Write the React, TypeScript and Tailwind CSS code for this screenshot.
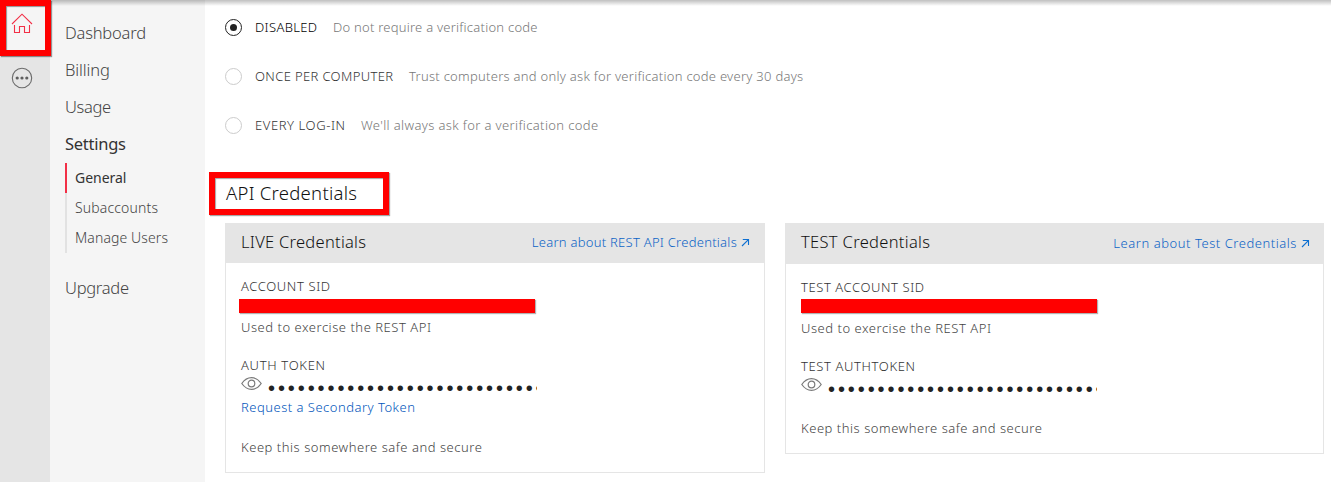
import type { ReactNode } from 'react';

const light = "font-['Noto_Sans',sans-serif] font-light whitespace-nowrap";
const book = "font-['Noto_Sans',sans-serif] font-normal whitespace-nowrap";

function HomeIcon() {
  return (
    <svg width="22" height="22" viewBox="0 0 22 22" fill="none" stroke="#f22f46" strokeWidth="1.1">
      <path d="M1 11 L11 1.2 L21 11" />
      <path d="M3.5 12 V19.5 H8.5 V13.5 H13.5 V19.5 H18.5 V12" />
    </svg>
  );
}

function MoreIcon() {
  return (
    <svg width="22" height="22" viewBox="0 0 22 22" fill="none">
      <circle cx="11" cy="11" r="9.7" stroke="#6b6b6b" strokeWidth="1.1" />
      <circle cx="6.2" cy="11" r="1.6" fill="#5e5e5e" />
      <circle cx="11" cy="11" r="1.6" fill="#5e5e5e" />
      <circle cx="15.8" cy="11" r="1.6" fill="#5e5e5e" />
    </svg>
  );
}

function EyeIcon() {
  return (
    <svg width="22" height="14" viewBox="0 0 22 14" fill="none" stroke="#7a7a7a" strokeWidth="1.2">
      <path d="M0.8 6.5 C3.5 2.6 7 0.7 10.5 0.7 S17.5 2.6 20.2 6.5 C17.5 10.4 14 12.4 10.5 12.4 S3.5 10.4 0.8 6.5 Z" />
      <circle cx="10.5" cy="6.5" r="3.3" />
    </svg>
  );
}

function Arrow() {
  return (
    <svg className="shrink-0" width="9" height="9" viewBox="0 0 9 9" fill="none" stroke="#0d6fd1" strokeWidth="1.1">
      <path d="M1.8 1.5 H7.5 V7 M7.4 1.6 L1 8" />
    </svg>
  );
}

function Option({ label, text, checked }: { label: ReactNode; text: ReactNode; checked?: boolean }) {
  return (
    <div className="flex h-[49px] items-center">
      <span
        className={
          checked
            ? 'flex size-[17px] shrink-0 items-center justify-center rounded-full border border-[#222]'
            : 'flex size-[17px] shrink-0 rounded-full border border-[#ccc]'
        }
      >
        {checked && <span className="size-[7px] rounded-full bg-[#222]" />}
      </span>
      <span className="ml-[13px] w-0 pb-[2px] whitespace-nowrap">{label}</span>
      <span className="pb-[2px]">{text}</span>
    </div>
  );
}

function Redaction({ className }: { className: string }) {
  return <div className={`h-[14px] w-[296px] bg-[#f00] shadow-[1px_1px_1px_rgba(0,0,0,0.3)] ${className}`} />;
}

function Token() {
  return (
    <div className="flex h-[22px] items-start">
      <div className="mt-[2px]">
        <EyeIcon />
      </div>
      <div className="ml-[5px] h-[22px] w-[269px] overflow-hidden whitespace-nowrap font-['Liberation_Sans',sans-serif] text-[20px] leading-[27px] tracking-[2.91px] text-[#222]">
        {'•'.repeat(28)}
      </div>
    </div>
  );
}

export default function App() {
  return (
    <div className="relative flex h-[482px] w-[1331px] overflow-hidden bg-white">
      <aside className="w-[50px] shrink-0 bg-[#e5e5e5]">
        <div className="relative z-20 h-[56px] w-[51px] border-6 border-[#f00] bg-[#f5f5f5] pt-[7px] pl-[5px] shadow-[1px_1px_1px_rgba(0,0,0,0.4),inset_1px_1px_1px_rgba(0,0,0,0.4)]">
          <HomeIcon />
        </div>
        <div className="mt-[11px] ml-[11px]">
          <MoreIcon />
        </div>
      </aside>

      <nav className="w-[155px] shrink-0 bg-[#f5f5f5] pt-[14px] pl-[15px] text-[16.5px] leading-[37px] text-[#444]">
        <div className={`${light} tracking-[-0.2px]`}>Dashboard</div>
        <div className={`${light} tracking-[-0.1px]`}>Billing</div>
        <div className={`${light} tracking-[-0.35px]`}>Usage</div>
        <div className={`${book} tracking-[-0.26px] text-[#333]`}>Settings</div>
        <div className="mt-px text-[14px] leading-[30px]">
          <div className={`${book} border-l-2 border-[#f22f46] pl-2 tracking-[-0.02px] text-[#333]`}>General</div>
          <div className={`${light} border-l-2 border-[#e2e2e2] pl-2 tracking-[0.15px]`}>Subaccounts</div>
          <div className={`${light} border-l-2 border-[#e2e2e2] pl-2 tracking-[0.11px]`}>Manage Users</div>
        </div>
        <div className={`${light} mt-4 tracking-[-0.28px]`}>Upgrade</div>
      </nav>

      <main className="pt-[3px] pl-5 text-[13px] leading-5">
        <Option
          checked
          label={<span className={`${light} tracking-[0.34px] text-black`}>DISABLED</span>}
          text={<span className={`${light} ml-[78px] tracking-[0.24px] text-[#777]`}>Do not require a verification code</span>}
        />
        <Option
          label={<span className={`${light} tracking-[0.36px] text-[#333]`}>ONCE PER COMPUTER</span>}
          text={
            <span className={`${light} ml-[154px] tracking-[0.27px] text-[#777]`}>
              Trust computers and only ask for verification code every 30 days
            </span>
          }
        />
        <Option
          label={<span className={`${light} tracking-[0.58px] text-[#333]`}>EVERY LOG-IN</span>}
          text={<span className={`${light} ml-[106px] tracking-[0.37px] text-[#777]`}>We'll always ask for a verification code</span>}
        />

        <h2
          className={`${light} -ml-4 mt-[22px] h-[43px] w-[180px] border-6 border-[#f00] pl-[11px] text-[18.5px] leading-[30px] tracking-[0.27px] text-[#111] shadow-[1px_1px_1px_rgba(0,0,0,0.35),inset_1px_1px_1px_rgba(0,0,0,0.35)]`}
        >
          API Credentials
        </h2>

        <div className="mt-2 flex items-start gap-5">
          <section className="w-[540px] border border-[#e5e5e5]">
            <header className="-mt-px flex h-10 items-center bg-[#e5e5e5] pr-[14px] pb-[3px] pl-[15px]">
              <h3 className={`${light} text-[16.5px] tracking-[0.27px] text-[#111]`}>LIVE Credentials</h3>
              <a className={`${light} ml-auto pt-px tracking-[0.26px] text-[#0b63c5]`}>Learn about REST API Credentials</a>
              <span className="ml-1 pt-[2px]"><Arrow /></span>
            </header>
            <div className="pt-[13px] pb-[15px] pl-[15px]">
              <div className={`${light} tracking-[0.62px] text-[#333]`}>ACCOUNT SID</div>
              <Redaction className="mt-[3px] -ml-[2px]" />
              <div className={`${light} mt-1 tracking-[0.53px] text-[#444]`}>Used to exercise the REST API</div>
              <div className={`${light} mt-[18px] tracking-[0.67px] text-[#333]`}>AUTH TOKEN</div>
              <Token />
              <div className={`${light} tracking-[0.49px] text-[#0055bb]`}>Request a Secondary Token</div>
              <div className={`${light} mt-5 tracking-[0.53px] text-[#444]`}>Keep this somewhere safe and secure</div>
            </div>
          </section>

          <section className="w-[539px] border border-[#e5e5e5]">
            <header className="-mt-px flex h-[41px] items-center bg-[#e5e5e5] pr-[13px] pb-[3px] pl-[15px]">
              <h3 className={`${light} text-[16.5px] tracking-[0.32px] text-[#111]`}>TEST Credentials</h3>
              <a className={`${light} ml-auto pt-px tracking-[0.54px] text-[#0b63c5]`}>Learn about Test Credentials</a>
              <span className="ml-1 pt-[2px]"><Arrow /></span>
            </header>
            <div className="pt-[13px] pb-[15px] pl-[15px]">
              <div className={`${light} tracking-[0.58px] text-[#333]`}>TEST ACCOUNT SID</div>
              <Redaction className="mt-[2px]" />
              <div className={`${light} mt-[5px] tracking-[0.53px] text-[#444]`}>Used to exercise the REST API</div>
              <div className={`${light} mt-[18px] tracking-[0.61px] text-[#333]`}>TEST AUTHTOKEN</div>
              <Token />
              <div className={`${light} mt-5 tracking-[0.53px] text-[#444]`}>Keep this somewhere safe and secure</div>
            </div>
          </section>
        </div>
      </main>

      <div className="pointer-events-none absolute top-0 right-0 left-[50px] z-10 h-[6px] bg-linear-to-b from-black/25 to-transparent" />
    </div>
  );
}
